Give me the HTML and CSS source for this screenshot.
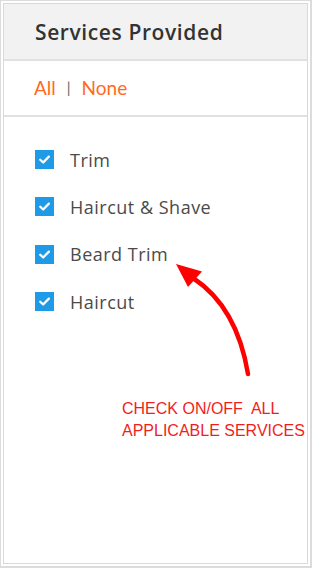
FILE: index.html
```html
<!DOCTYPE html>
<html>
<head>
<meta charset="utf-8">
<link rel="stylesheet" href="styles.css">
</head>
<body>
<div class="frame">
  <div class="panel">
    <div class="header"><h1 class="title">Services Provided</h1></div>
    <div class="links">
      <span class="link">All</span><span class="sep">|</span><span class="link">None</span>
    </div>
    <ul class="list">
      <li class="row"><span class="box"><svg viewBox="0 0 20 20" width="19" height="19"><path d="M5.5 10.3 L8.6 13.2 L14.6 7" fill="none" stroke="#fff" stroke-width="2.4" stroke-linecap="round" stroke-linejoin="round"/></svg></span><span class="label">Trim</span></li>
      <li class="row"><span class="box"><svg viewBox="0 0 20 20" width="19" height="19"><path d="M5.5 10.3 L8.6 13.2 L14.6 7" fill="none" stroke="#fff" stroke-width="2.4" stroke-linecap="round" stroke-linejoin="round"/></svg></span><span class="label">Haircut &amp; Shave</span></li>
      <li class="row"><span class="box"><svg viewBox="0 0 20 20" width="19" height="19"><path d="M5.5 10.3 L8.6 13.2 L14.6 7" fill="none" stroke="#fff" stroke-width="2.4" stroke-linecap="round" stroke-linejoin="round"/></svg></span><span class="label">Beard Trim</span></li>
      <li class="row"><span class="box"><svg viewBox="0 0 20 20" width="19" height="19"><path d="M5.5 10.3 L8.6 13.2 L14.6 7" fill="none" stroke="#fff" stroke-width="2.4" stroke-linecap="round" stroke-linejoin="round"/></svg></span><span class="label">Haircut</span></li>
    </ul>
  </div>
  <svg class="arrow" width="312" height="568" viewBox="0 0 312 568">
    <path d="M247 373 Q236 306 192 277" fill="none" stroke="#ff0000" stroke-width="4.5" stroke-linecap="round"/>
    <polygon points="175,263 201,270.5 187,286" fill="#ff0000"/>
  </svg>
  <div class="note">CHECK ON/OFF&nbsp; ALL<br>APPLICABLE SERVICES</div>
</div>
</body>
</html>
```
FILE: styles.css
```css
html, body {
  margin: 0;
  padding: 0;
  background: #fff;
}
.frame {
  position: relative;
  width: 312px;
  height: 568px;
  box-sizing: border-box;
  border: 1px solid #dcdcdc;
  border-right-width: 2px;
  border-bottom-width: 2px;
  padding: 2px;
}
.panel {
  height: 100%;
  box-sizing: border-box;
  border: 1px solid #d9d9d9;
  background: #fff;
}
.header {
  height: 55px;
  background: #f2f2f2;
  border-bottom: 2px solid #e1e1e1;
  display: flex;
  align-items: center;
  padding-left: 31px;
}
.title {
  margin: 0;
  font-family: "Open Sans", "Liberation Sans", sans-serif;
  font-weight: 600;
  font-size: 21px;
  letter-spacing: 0.6px;
  color: #333;
}
.links {
  height: 56px;
  border-bottom: 2px solid #e1e1e1;
  display: flex;
  align-items: center;
  padding-left: 30px;
  padding-bottom: 2px;
  box-sizing: border-box;
  font-family: "Lato", "Liberation Sans", sans-serif;
  font-size: 19px;
}
.link {
  color: #ff6b1e;
}
.sep {
  color: #666;
  font-size: 15px;
  margin: 0 11px;
}
.list {
  list-style: none;
  margin: 0;
  padding: 19px 0 0 31px;
}
.row {
  display: flex;
  align-items: center;
  height: 47.3px;
}
.box {
  width: 19px;
  height: 19px;
  background: #1e9ae6;
  display: flex;
}
.label {
  margin-left: 16px;
  font-family: "Open Sans", "Liberation Sans", sans-serif;
  font-size: 18px;
  letter-spacing: 0.5px;
  color: #4a4a4a;
}
.arrow {
  position: absolute;
  left: 0;
  top: 0;
}
.note {
  position: absolute;
  left: 121px;
  top: 397px;
  font-family: "Liberation Sans", Arial, sans-serif;
  font-size: 16px;
  line-height: 22px;
  color: #f21d1d;
}
```
